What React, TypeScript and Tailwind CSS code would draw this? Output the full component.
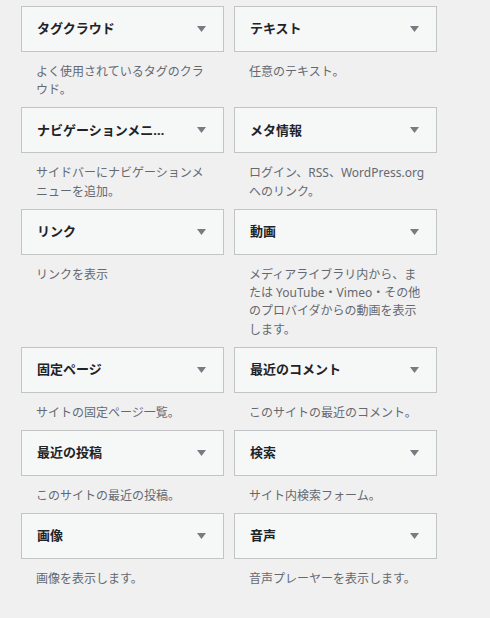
import React from "react";

const widgets: { title: string; desc: React.ReactNode }[] = [
  { title: "タグクラウド", desc: <>よく使用されているタグのクラ<br />ウド。</> },
  { title: "テキスト", desc: <>任意のテキスト。</> },
  { title: "ナビゲーションメニ…", desc: <>サイドバーにナビゲーションメ<br />ニューを追加。</> },
  { title: "メタ情報", desc: <>ログイン、RSS、WordPress.org<br />へのリンク。</> },
  { title: "リンク", desc: <>リンクを表示</> },
  {
    title: "動画",
    desc: (
      <>
        メディアライブラリ内から、ま<br />たは YouTube・Vimeo・その他<br />のプロバイダからの動画を表示<br />します。
      </>
    ),
  },
  { title: "固定ページ", desc: <>サイトの固定ページ一覧。</> },
  { title: "最近のコメント", desc: <>このサイトの最近のコメント。</> },
  { title: "最近の投稿", desc: <>このサイトの最近の投稿。</> },
  { title: "検索", desc: <>サイト内検索フォーム。</> },
  { title: "画像", desc: <>画像を表示します。</> },
  { title: "音声", desc: <>音声プレーヤーを表示します。</> },
];

function Widget({ title, desc }: { title: string; desc: React.ReactNode }) {
  return (
    <div className="flex flex-col">
      <div className="flex h-[46px] items-center justify-between border border-[#c3c4c7] bg-[#f6f7f7] pl-[15px] pr-[17px]">
        <span className="text-[13px] font-bold text-[#1d2327] whitespace-nowrap">{title}</span>
        <svg width="9" height="6" viewBox="0 0 9 6" className="block">
          <path d="M0 0 H9 L4.5 6 Z" fill="#787c82" />
        </svg>
      </div>
      <div className="px-[15px] pt-[11px] pb-[7.67px] text-[12px] leading-[18.33px] text-[#646970] whitespace-nowrap">
        {desc}
      </div>
    </div>
  );
}

export default function App() {
  return (
    <div
      className="min-h-[618px] w-[490px] bg-[#f0f0f1] pl-[21px] pt-[6px]"
      style={{ fontFamily: '"Noto Sans", "Noto Sans CJK JP", sans-serif' }}
    >
      <div className="grid grid-cols-[203px_203px] gap-x-[10px]">
        {widgets.map((w) => (
          <Widget key={w.title} title={w.title} desc={w.desc} />
        ))}
      </div>
    </div>
  );
}
